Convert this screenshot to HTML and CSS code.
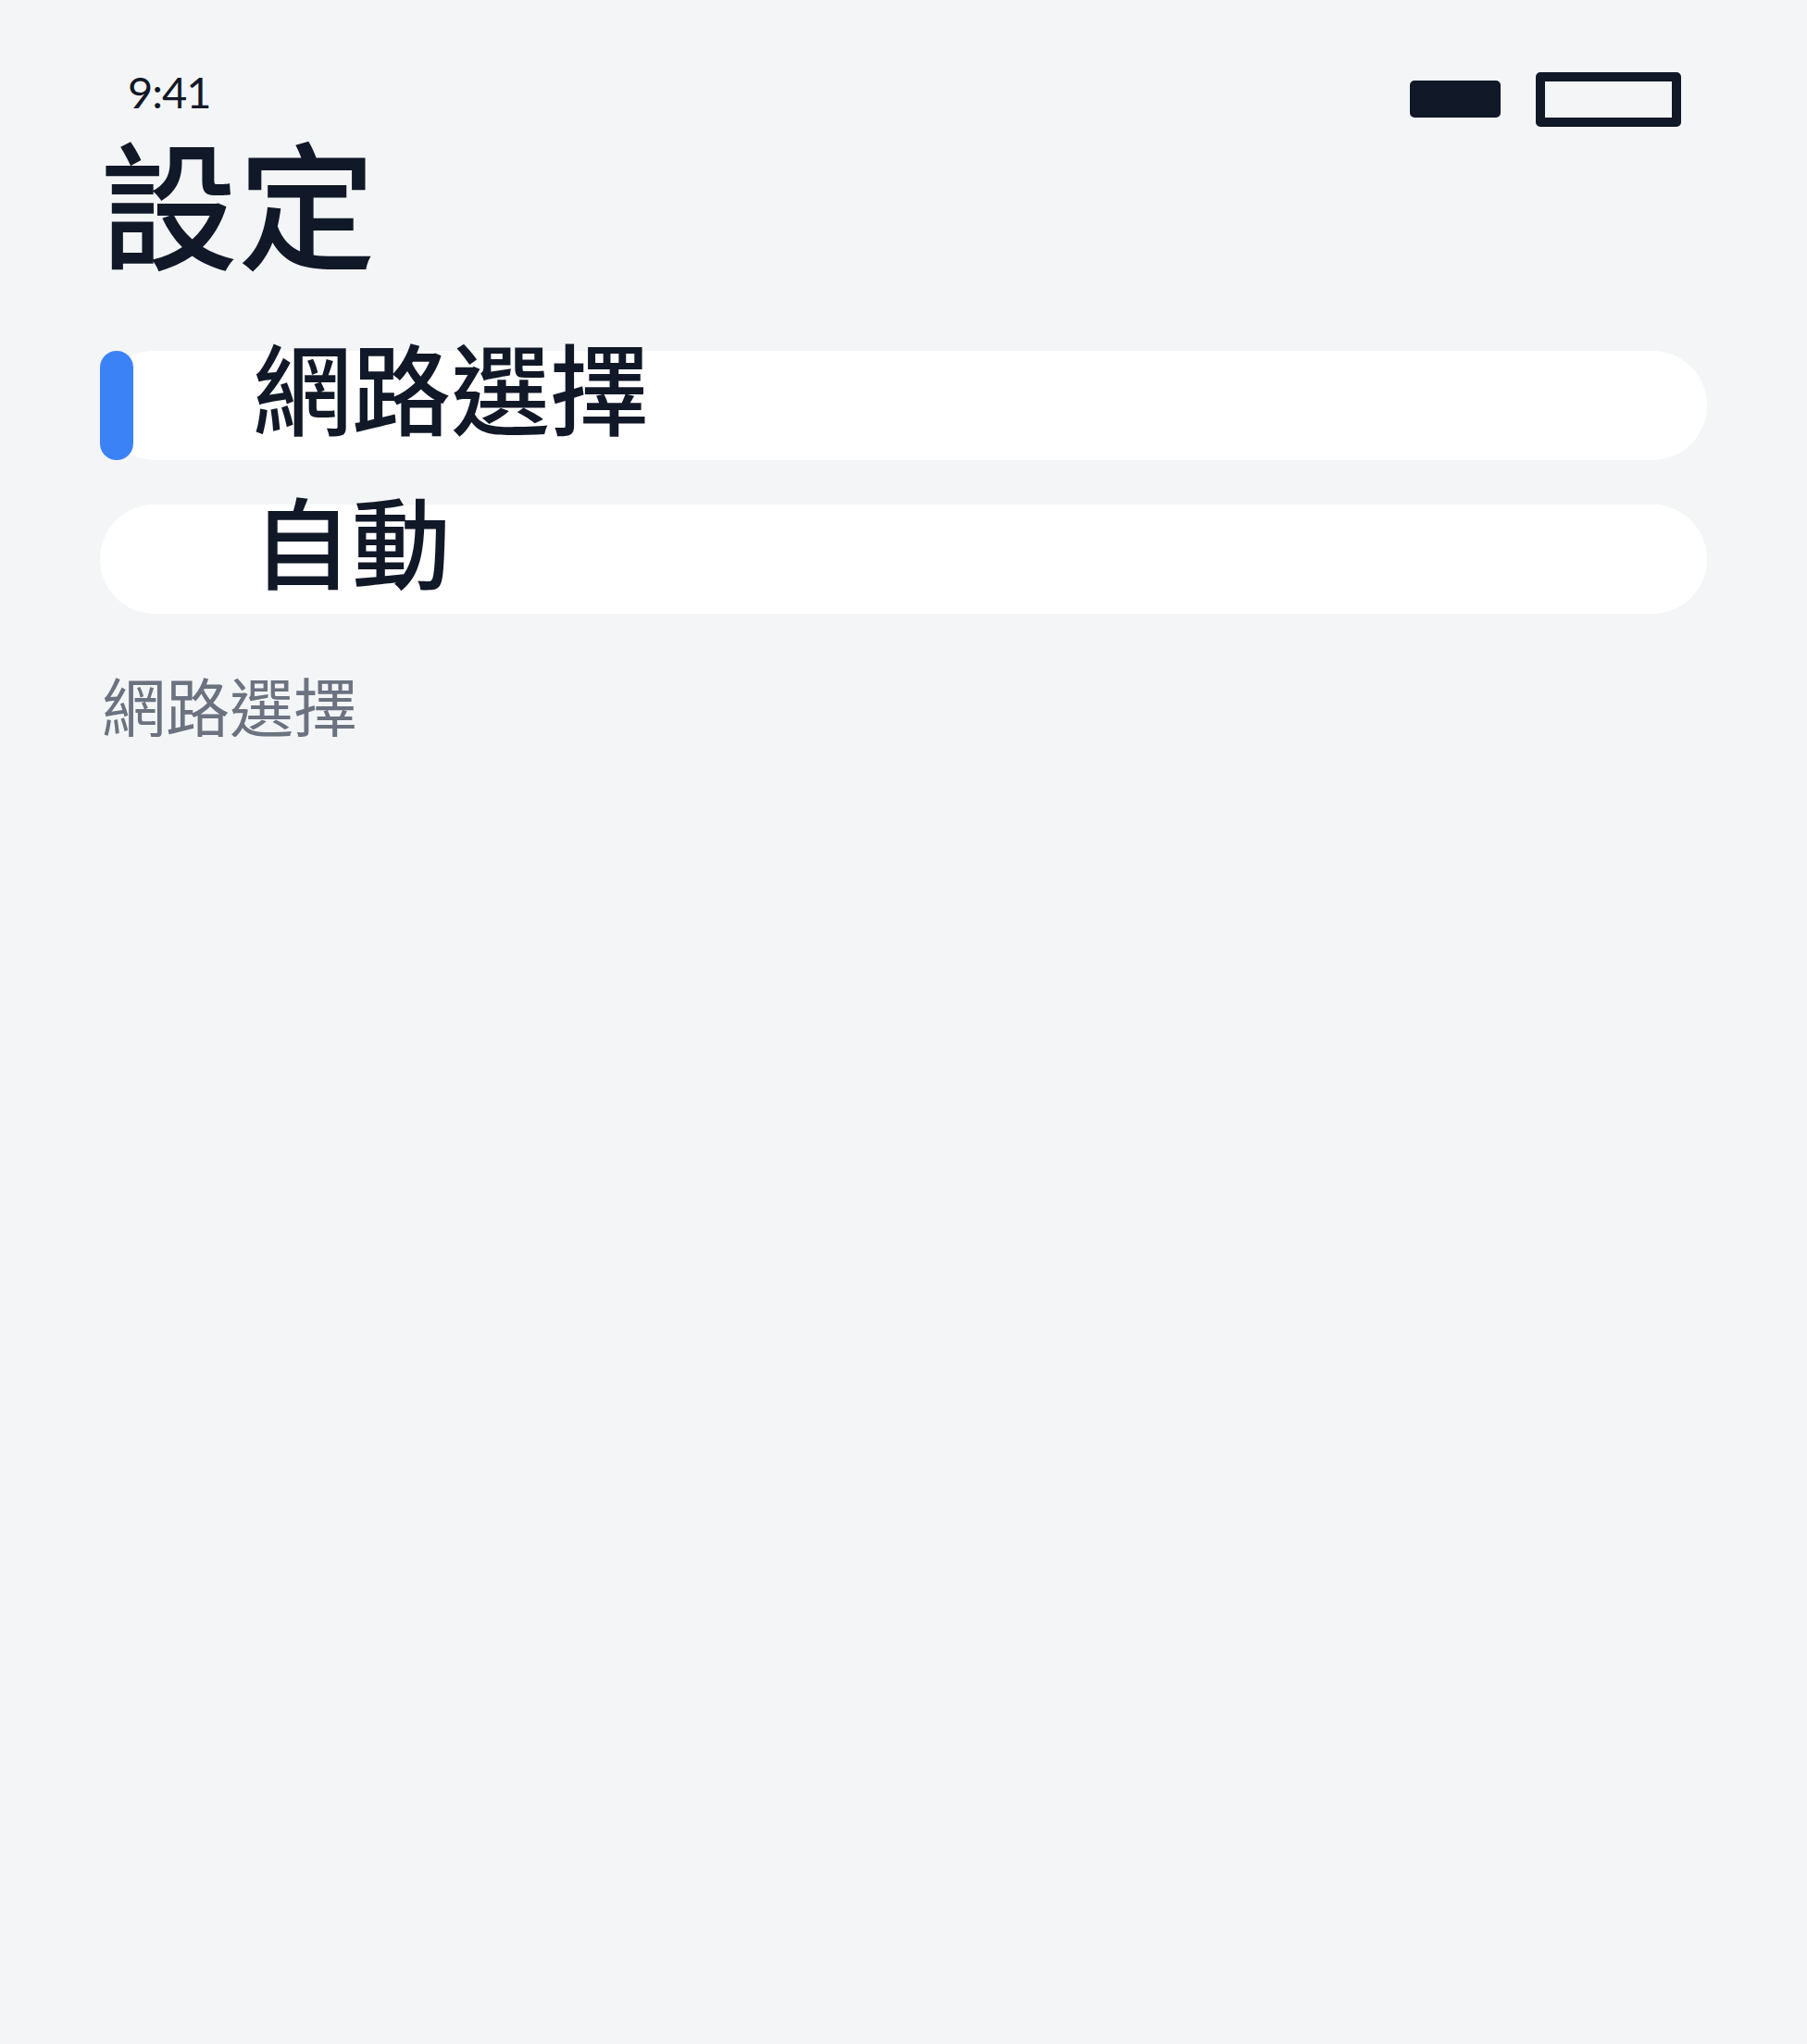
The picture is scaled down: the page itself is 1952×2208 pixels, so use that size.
FILE: index.html
```html
<!DOCTYPE html>
<html lang="zh-Hant">

<head>
    <meta charset="utf-8">
    <title>設定</title>
    <link rel="stylesheet" href="styles.css">
</head>

<body>
    <div class="page">
        <!-- 狀態列 -->
        <div class="status">
            <span class="time">9:41</span>
            <div class="status-icons">
                <span class="signal"></span>
                <span class="battery"></span>
            </div>
        </div>

        <h1 class="title">設定</h1>

        <!-- 選項 -->
        <ul class="list">
            <li class="item">
                <span class="indicator active"></span>
                <span class="label">網路選擇</span>
            </li>
            <li class="item">
                <span class="indicator"></span>
                <span class="label">自動</span>
            </li>
        </ul>

        <p class="caption">網路選擇</p>
    </div>
</body>

</html>
```
FILE: styles.css
```css
* {
    box-sizing: border-box;
}

body {
    margin: 0;
    background-color: #f4f5f7;
    color: #111827;
    font-family: "Noto Sans CJK TC", "Noto Sans", sans-serif;
}

.page {
    padding: 0 108px;
}

.status {
    display: flex;
    justify-content: space-between;
    align-items: flex-start;
    padding: 76px 28px 0 30px;
    height: 138px;
}

.status-icons {
    display: flex;
    align-items: center;
    gap: 38px;
    height: 64px;
    margin-top: -1px;
}

.time {
    font-family: Lato, "Noto Sans", sans-serif;
    font-size: 47px;
    line-height: 47px;
    letter-spacing: -1px;
}

.signal {
    width: 98px;
    height: 40px;
    background-color: #111827;
    border-radius: 5px;
}

.battery {
    width: 157px;
    height: 59px;
    border: 10px solid #111827;
    border-radius: 5px;
}

.title {
    margin: 2px 0 0;
    font-size: 149px;
    line-height: 150px;
    font-weight: 500;
}

.list {
    margin: 89px 0 0;
    padding: 0;
    list-style: none;
    display: flex;
    flex-direction: column;
    gap: 48px;
}

.item {
    display: flex;
    align-items: center;
    height: 118px;
    background-color: #fff;
    border-radius: 59px;
}

.indicator {
    width: 36px;
    height: 100%;
    border-radius: 18px;
}

.indicator.active {
    background-color: #3b82f6;
}

.label {
    margin: 0 0 46px 129px;
    font-size: 107px;
    line-height: 107px;
    font-weight: 500;
}

.caption {
    margin: 64px 0 0 2px;
    font-size: 69px;
    line-height: 69px;
    color: #6b7280;
    font-weight: 400;
}
```
